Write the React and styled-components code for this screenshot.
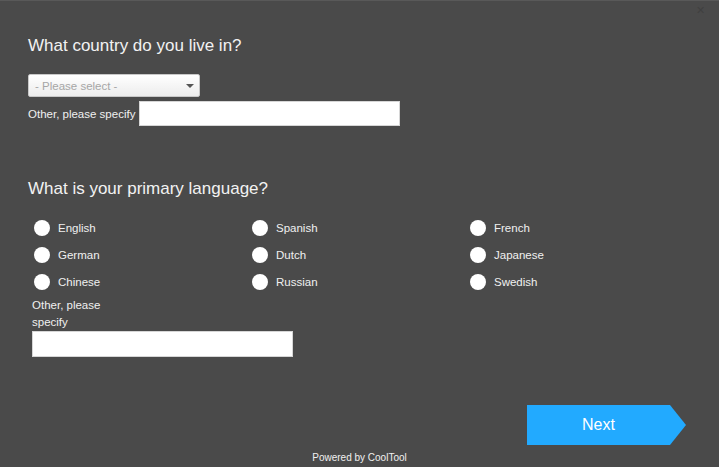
import React from 'react'
import styled, { createGlobalStyle } from 'styled-components'

const Global = createGlobalStyle`
  html, body { margin: 0; padding: 0; background: #4a4a4a; }
  body { font-family: "Liberation Sans", Arial, sans-serif; }
  * { box-sizing: border-box; }
`

const Page = styled.div`
  position: relative;
  width: 719px;
  height: 467px;
  background: #4a4a4a;
  border-top: 1px solid #595959;
  color: #fff;
  display: flex;
  flex-direction: column;
  padding: 34px 0 0 28px;
  overflow: hidden;
`

const Close = styled.span`
  position: absolute;
  top: 3px;
  right: 14px;
  font-size: 11px;
  color: #404040;
`

const Question = styled.h2`
  margin: 0;
  font-size: 17px;
  line-height: 22px;
  font-weight: normal;
  color: #f2f2f2;
`

const Select = styled.div`
  margin-top: 17px;
  width: 172px;
  height: 23px;
  border: 1px solid #c8c8c8;
  border-radius: 2px;
  background: linear-gradient(#ffffff, #ececec);
  display: flex;
  align-items: center;
  justify-content: space-between;
  padding: 0 5px 0 6px;
  font-size: 11.5px;
  color: #a6a6a6;
`

const Caret = styled.span`
  width: 0;
  height: 0;
  margin-top: 1px;
  border-left: 4px solid transparent;
  border-right: 4px solid transparent;
  border-top: 4px solid #555;
`

const OtherRow = styled.div`
  margin-top: 4px;
  display: flex;
  align-items: center;
  gap: 4px;
  font-size: 11.5px;
  color: #f0f0f0;
`

const TextBox = styled.div`
  width: ${p => p.$w}px;
  height: ${p => p.$h}px;
  background: #fff;
  border: 1px solid #d6d6d6;
`

const Section = styled.div`
  margin-top: ${p => p.$top}px;
  margin-left: ${p => p.$left || 0}px;
`

const Grid = styled.div`
  margin-top: 14px;
  margin-left: 6px;
  display: grid;
  grid-template-columns: repeat(3, 218px);
  grid-auto-rows: 27px;
`

const Option = styled.label`
  display: flex;
  align-items: center;
  gap: 8px;
  font-size: 11.5px;
  color: #f0f0f0;
`

const Dot = styled.span`
  width: 16px;
  height: 16px;
  border-radius: 50%;
  background: #fff;
`

const OtherBlock = styled.div`
  margin-top: 2px;
  margin-left: 4px;
  font-size: 11.5px;
  line-height: 17px;
  color: #f0f0f0;
  width: 90px;
`

const Footer = styled.div`
  margin-top: auto;
  margin-left: -28px;
  display: flex;
  flex-direction: column;
`

const NextRow = styled.div`
  display: flex;
  justify-content: flex-end;
  padding-right: 33px;
`

const NextButton = styled.button`
  width: 159px;
  height: 40px;
  border: none;
  padding: 0 16px 0 0;
  background: #22aaff;
  clip-path: polygon(0 0, 143px 0, 100% 50%, 143px 100%, 0 100%);
  color: #fff;
  font-family: inherit;
  font-size: 16px;
  cursor: pointer;
`

const Powered = styled.div`
  text-align: center;
  font-size: 10px;
  color: #f0f0f0;
  padding: 7px 0 4px;
`

const languages = [
  'English', 'Spanish', 'French',
  'German', 'Dutch', 'Japanese',
  'Chinese', 'Russian', 'Swedish',
]

export default function App() {
  return (
    <Page>
      <Global />
      <Close>✕</Close>
      <Question>What country do you live in?</Question>
      <Select>
        <span>- Please select -</span>
        <Caret />
      </Select>
      <OtherRow>
        <span>Other, please specify</span>
        <TextBox $w={261} $h={25} />
      </OtherRow>

      <Section $top={52}>
        <Question>What is your primary language?</Question>
        <Grid>
          {languages.map(l => (
            <Option key={l}><Dot />{l}</Option>
          ))}
        </Grid>
        <OtherBlock>Other, please specify</OtherBlock>
        <Section $top={0} $left={4}>
          <TextBox $w={261} $h={26} />
        </Section>
      </Section>

      <Footer>
        <NextRow>
          <NextButton>Next</NextButton>
        </NextRow>
        <Powered>Powered by CoolTool</Powered>
      </Footer>
    </Page>
  )
}
